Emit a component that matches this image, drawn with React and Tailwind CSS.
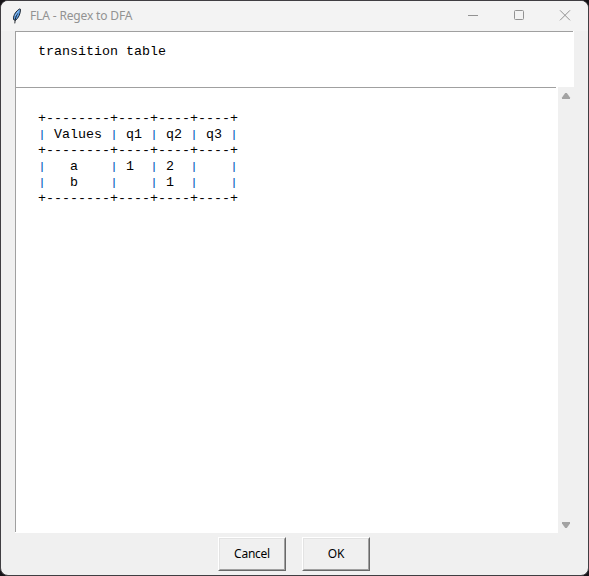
import React from "react";

const rows = [
  "+--------+----+----+----+",
  "| Values | q1 | q2 | q3 |",
  "+--------+----+----+----+",
  "|   a    | 1  | 2  |    |",
  "|   b    |    | 1  |    |",
  "+--------+----+----+----+",
];

const mono =
  "font-['Liberation_Mono',monospace] text-[13.333px] leading-4 text-black whitespace-pre";

function Row({ text }) {
  return (
    <div className="h-4">
      {text.split(/(\|)/).map((part, i) =>
        part === "|" ? (
          <span key={i} className="inline-block h-4 origin-[50%_60%] scale-y-[0.85] align-top text-[#0058bc]">|</span>
        ) : (
          part
        )
      )}
    </div>
  );
}

function Feather() {
  return (
    <svg width="10" height="16" viewBox="0 0 10 16" className="block">
      <path
        d="M7.8 0.9C5.2 2 2.2 5.5 1.5 9.2L1.6 11.6L3.4 12.4C6.4 10.4 8.6 5.6 8.5 1.3Z"
        fill="#5b9de4"
        stroke="#14181f"
        strokeWidth="0.9"
      />
      <path d="M5.6 5.4C4 8 3 11 2.8 15.4" fill="none" stroke="#14181f" strokeWidth="0.9" />
      <path d="M7 2.4L3 8" stroke="#8fc1f5" strokeWidth="1" />
    </svg>
  );
}

function Button({ children }) {
  return (
    <button className="h-[34px] w-[68px] border border-t-white border-l-white border-r-[#696969] border-b-[#696969] bg-[#f0f0f0]">
      <span className="flex h-full w-full items-center justify-center border border-t-[#e3e3e3] border-l-[#e3e3e3] border-r-[#a0a0a0] border-b-[#a0a0a0] font-['Noto_Sans',sans-serif] text-[12px] leading-4 tracking-[-0.25px] text-black">
        {children}
      </span>
    </button>
  );
}

export default function App() {
  return (
    <div className="h-[576px] w-[589px] overflow-hidden bg-[#161418]">
      <div className="flex h-full w-full flex-col overflow-hidden rounded-[8px] border border-[#403e42] bg-[#f0f0f0]">
        <header className="flex h-[30px] shrink-0 items-center bg-[#f3f3f3] pl-[11px] text-[#929292]">
          <Feather />
          <span className="ml-2 font-['Noto_Sans',sans-serif] text-[12px] leading-4 tracking-[-0.15px]">
            FLA - Regex to DFA
          </span>
          <div className="mr-[17px] ml-auto flex items-center gap-[34px]">
            <svg width="12" height="12" viewBox="0 0 12 12" stroke="currentColor" fill="none">
              <path d="M1 5.5H11" />
            </svg>
            <svg width="12" height="12" viewBox="0 0 12 12" stroke="currentColor" fill="none">
              <rect x="1.5" y="0.5" width="9" height="9" rx="1" />
            </svg>
            <svg width="12" height="12" viewBox="0 0 12 12" stroke="currentColor" fill="none">
              <path d="M1 0.3L11 10.3M11 0.3L1 10.3" />
            </svg>
          </div>
        </header>
        <main className="ml-[14px] flex w-[559px] shrink-0 flex-col">
          <section className="flex h-14 bg-white pr-px">
            <div className={`grow border-t border-l border-[#a0a0a0] pt-3 pl-[22px] ${mono}`}>
              transition table
            </div>
          </section>
          <div className="flex h-[446px]">
            <section className="flex w-[543px] bg-white pr-[2px] pb-px">
              <div className={`grow border-t border-l border-[#a0a0a0] pt-[23px] pl-[22px] ${mono}`}>
                {rows.map((row, i) => (
                  <Row key={i} text={row} />
                ))}
              </div>
            </section>
            <div className="flex w-4 flex-col items-center justify-between pt-[6px] pb-1 text-[#a3a3a3]">
              <svg width="10" height="7" viewBox="0 0 10 7" fill="currentColor">
                <path d="M4.2 0H5.8L9 4.6V6H1V4.6Z" />
              </svg>
              <svg width="10" height="7" viewBox="0 0 10 7" fill="currentColor">
                <path d="M4.2 6H5.8L9 1.4V0H1V1.4Z" />
              </svg>
            </div>
          </div>
        </main>
        <footer className="flex gap-4 pt-1 pl-[217px]">
          <Button>Cancel</Button>
          <Button>OK</Button>
        </footer>
      </div>
    </div>
  );
}
